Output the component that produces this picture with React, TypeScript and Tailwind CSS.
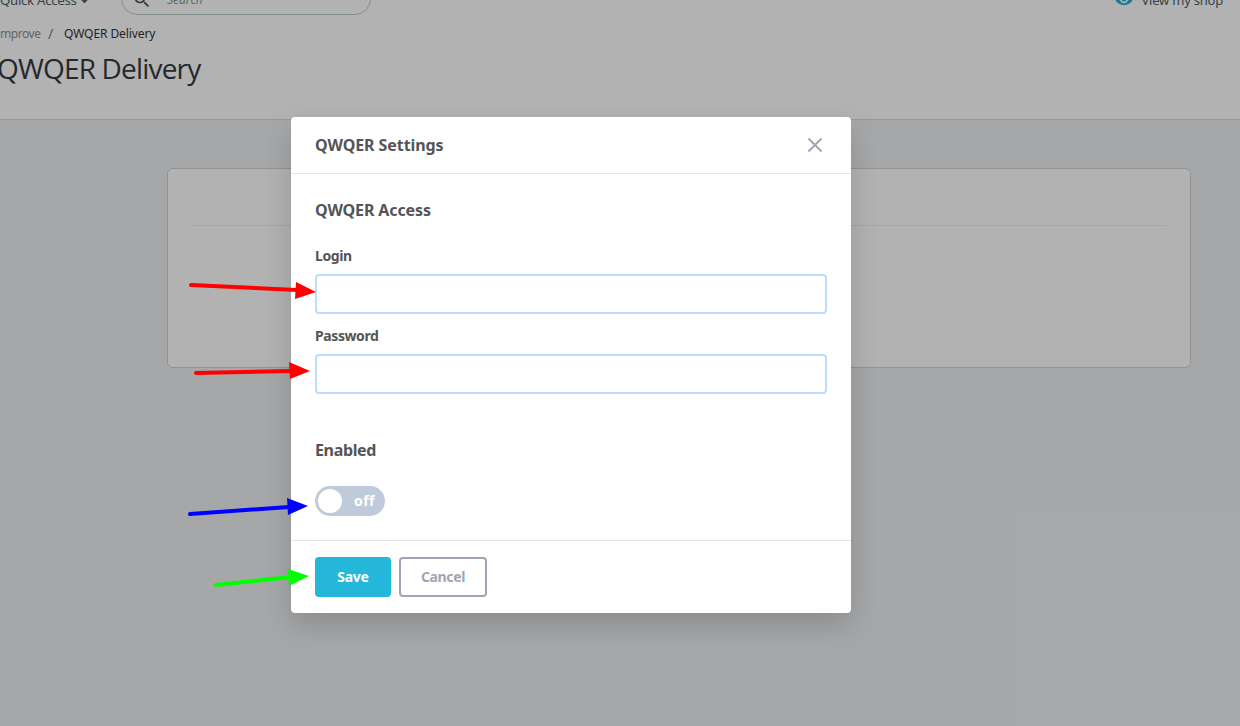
import React from "react";

function Arrow({ x1, y1, x2, y2, head, color }: { x1: number; y1: number; x2: number; y2: number; head: string; color: string }) {
  return (
    <g>
      <line x1={x1} y1={y1} x2={x2} y2={y2} stroke={color} strokeWidth="4" strokeLinecap="round" />
      <polygon points={head} fill={color} />
    </g>
  );
}

function Header() {
  return (
    <header className="h-[120px] border-b border-[#d3d8db] bg-white">
      <div className="flex h-[15px] items-end justify-between overflow-hidden">
        <div className="flex h-[32px] items-center">
          <span className="mt-[2px] w-[77px] whitespace-nowrap text-[13.2px] leading-[18px] tracking-[-0.27px] text-[#4e6167]">Quick Access</span>
          <svg className="ml-[3px] mt-[3px] h-[5px] w-[9px] shrink-0" viewBox="0 0 9 5"><path d="M0 0h9v.5L5 5H4L0 .5z" fill="#4e6167" /></svg>
          <div className="ml-[32px] flex h-[32px] w-[250px] items-center rounded-full border border-[#bbcdd2] pl-[10px]">
            <svg className="mt-px h-[20px] w-[20px] shrink-0" viewBox="0 0 24 24" fill="#4e5254">
              <path d="M15.5 14h-.79l-.28-.27A6.47 6.47 0 0 0 16 9.5 6.5 6.5 0 1 0 9.5 16c1.61 0 3.09-.59 4.23-1.57l.27.28v.79l5 4.99L20.49 19zm-6 0C7.01 14 5 11.99 5 9.5S7.01 5 9.5 5 14 7.01 14 9.5 11.99 14 9.5 14z" />
            </svg>
            <span className="ml-[15px] mt-[2px] text-[12px] italic leading-[18px] text-[#8b999e]">Search</span>
          </div>
        </div>
        <div className="mr-[17px] flex h-[32px] items-center">
          <svg className="mr-[8px] h-[20px] w-[20px]" viewBox="0 0 24 24" fill="#25b9d7">
            <path d="M12 4.5C7 4.5 2.73 7.61 1 12c1.73 4.39 6 7.5 11 7.5s9.27-3.11 11-7.5c-1.73-4.39-6-7.5-11-7.5zM12 17c-2.76 0-5-2.24-5-5s2.24-5 5-5 5 2.24 5 5-2.24 5-5 5zm0-8a3 3 0 1 0 0 6 3 3 0 0 0 0-6z" />
          </svg>
          <span className="mt-[2px] whitespace-nowrap text-[13px] leading-[18px] tracking-[-0.22px] text-[#4e6167]">View my shop</span>
        </div>
      </div>
      <nav className="mt-[10px] flex h-[18px] items-center whitespace-nowrap text-[12px] leading-[18px]">
        <span className="w-[41px] tracking-[-0.45px] text-[#8b9093]">mprove</span>
        <span className="ml-[7px] w-[16px] text-[14px] text-[#6c868e]">/</span>
        <span className="tracking-[-0.09px] text-[#303338]">QWQER Delivery</span>
      </nav>
      <h1 className="-ml-[3px] mt-[6px] whitespace-nowrap font-['Open_Sans',sans-serif] text-[28px] leading-[38px] tracking-[-0.82px] text-[#363a41]">QWQER Delivery</h1>
    </header>
  );
}

function Field({ label }: { label: string }) {
  return (
    <label className="block h-[80px]">
      <span className="block h-[28px] text-[14px] font-bold leading-[20px] tracking-[-0.4px]">{label}</span>
      <input className="block h-[40px] w-full rounded-[4px] border-2 border-[#bbdcff] bg-white px-3 text-sm outline-none" />
    </label>
  );
}

function Modal() {
  return (
    <section className="flex h-[496px] w-[560px] flex-col rounded-[4px] bg-white text-[#555555] shadow-[0_12px_28px_rgba(0,0,0,0.16)]">
      <div className="flex h-[57px] items-center justify-between border-b border-[#e4e4ec] pl-6 pr-[28px]">
        <h2 className="text-[16px] font-bold leading-[24px] tracking-[-0.08px]">QWQER Settings</h2>
        <svg className="h-[16px] w-[16px]" viewBox="0 0 16 16"><path d="M1.5 1.5l13 13M14.5 1.5l-13 13" fill="none" stroke="#9fa5b5" strokeWidth="2" /></svg>
      </div>
      <div className="flex-1 px-6 pt-6">
        <h3 className="h-[48px] text-[16px] font-bold leading-[24px] tracking-[-0.12px]">QWQER Access</h3>
        <Field label="Login" />
        <Field label="Password" />
        <h3 className="mt-[32px] text-[16px] font-bold leading-[24px] tracking-[-0.35px]">Enabled</h3>
        <div className="mt-[24px] flex h-[30px] w-[70px] items-center justify-between rounded-full bg-[#bfcbda] pl-[3px] pr-[10px]">
          <span className="h-6 w-6 rounded-full bg-white" />
          <span className="text-[14px] font-bold leading-[20px] tracking-[0.5px] text-white">off</span>
        </div>
      </div>
      <div className="flex h-[73px] gap-2 border-t border-[#e4e4e8] px-6 pt-4">
        <button className="h-[40px] w-[76px] rounded-[4px] bg-[#25b7d9] pb-[2px] text-[14px] font-bold tracking-[-0.3px] text-white">Save</button>
        <button className="h-[40px] w-[88px] rounded-[4px] border-2 border-[#9fa5b5] pb-[2px] text-[14px] font-bold tracking-[-0.35px] text-[#9fa5b5]">Cancel</button>
      </div>
    </section>
  );
}

export default function App() {
  return (
    <main className="relative h-[726px] w-[1240px] overflow-hidden bg-[#eef0f2] font-['Noto_Sans',sans-serif]">
      <Header />
      <div className="ml-[167px] mt-[48px] h-[200px] w-[1024px] rounded-[6px] border border-[#cfd3d6] bg-white px-6">
        <div className="h-[57px] border-b border-[#eeeeee]" />
      </div>
      <div className="absolute inset-0 bg-black/30 pl-[291px] pt-[117px]">
        <Modal />
      </div>
      <svg className="pointer-events-none absolute inset-0" width="1240" height="726" viewBox="0 0 1240 726">
        <Arrow x1={191} y1={285} x2={297} y2={290} head="296,282 316,292 295,299" color="#ff0000" />
        <Arrow x1={196} y1={373} x2={291} y2={371} head="289,362 310,371 290,379" color="#ff0000" />
        <Arrow x1={190} y1={514} x2={289} y2={507} head="287,498 308,506 288,515" color="#0000ff" />
        <Arrow x1={216} y1={585} x2={290} y2={577} head="288,569 309,576 289,586" color="#00ff00" />
      </svg>
    </main>
  );
}
